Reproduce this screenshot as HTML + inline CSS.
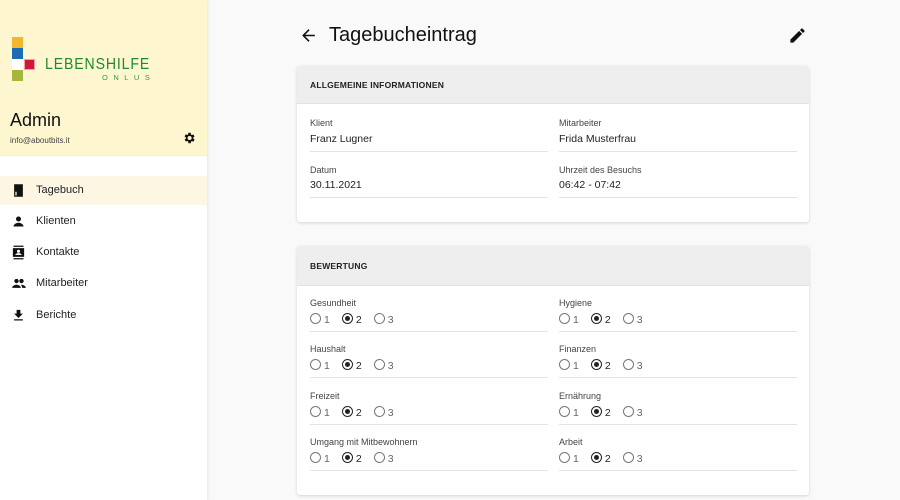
<!DOCTYPE html><html><head><style>
*{margin:0;padding:0;box-sizing:border-box}
body{width:900px;height:500px;overflow:hidden;background:#f9f9f9;font-family:"Liberation Sans",sans-serif;position:relative;color:#222}
.a{position:absolute}
.side{left:0;top:0;width:207px;height:500px;background:#fff;box-shadow:1px 0 3px rgba(0,0,0,.08)}
.top{left:0;top:0;width:207px;height:156px;background:#fdf6cf;border-bottom:1px solid #eee}
.nav{left:0;width:207px;height:29px;font-size:11px;color:#222}
.nav span{position:absolute;left:36px;top:8px}
.nav svg{position:absolute;left:11px;top:7px}
.card{left:297px;width:512px;background:#fff;border-radius:3px;box-shadow:0 1px 3px rgba(0,0,0,.15);overflow:hidden}
.hd{background:#eee;border-bottom:1px solid #e2e2e2;font-size:8.5px;font-weight:bold;letter-spacing:.2px;padding-left:13px}
.lb{font-size:9px;color:#444}
.vl{font-size:10.5px;color:#222}
.ln{height:1px;background:#e3e3e3;width:238px}
.r{font-size:10.5px;color:#666;white-space:nowrap}
.c{display:inline-block;width:11px;height:11px;border:1px solid #777;border-radius:50%;vertical-align:-1px;margin-right:3px;position:relative}
.c.on{border-color:#222}.c.on:after{content:"";position:absolute;left:2px;top:2px;width:5px;height:5px;border-radius:50%;background:#222}
.sp{display:inline-block;width:12px}
</style></head><body>
<div class="a side"></div>
<div class="a top"></div>
<div class="a" style="left:12px;top:37px;width:11px;height:11px;background:#f3b62f"></div>
<div class="a" style="left:12px;top:48px;width:11px;height:11px;background:#1c6bb5"></div>
<div class="a" style="left:12px;top:59px;width:11px;height:11px;background:#fff"></div>
<div class="a" style="left:24px;top:59px;width:11px;height:11px;background:#d4153a;border:1px solid #f0a0a0"></div>
<div class="a" style="left:12px;top:70px;width:11px;height:11px;background:#a5b73a"></div>
<div class="a" style="left:45px;top:56px;font-size:16px;color:#1e8a2c;letter-spacing:1px;transform:scaleX(.88);transform-origin:0 0">LEBENSHILFE</div>
<div class="a" style="left:102px;top:73px;font-size:7.5px;color:#3a9a40;letter-spacing:5.5px">ONLUS</div>
<div class="a" style="left:10px;top:110px;font-size:18px;color:#111">Admin</div>
<div class="a" style="left:10px;top:136px;font-size:8px;color:#444">info@aboutbits.it</div>
<svg class="a" style="left:182px;top:131px" width="14" height="14" viewBox="0 0 24 24"><path fill="#111" d="M19.4 13a7.5 7.5 0 000-2l2.1-1.6-2-3.5-2.5 1a7 7 0 00-1.7-1L15 3h-4l-.4 2.7a7 7 0 00-1.7 1l-2.5-1-2 3.5L6.6 11a7.5 7.5 0 000 2l-2.1 1.6 2 3.5 2.5-1a7 7 0 001.7 1L11 21h4l.4-2.7a7 7 0 001.7-1l2.5 1 2-3.5zM13 15.5A3.5 3.5 0 1113 8.5a3.5 3.5 0 010 7z"/></svg>
<div class="a nav" style="top:176px;background:#fdf6e3"><svg width="15" height="15" viewBox="0 0 24 24"><path d="M5 2h14v20H5z" fill="#111"/><path d="M7 14v6h2v-6z" fill="#fff"/></svg><span>Tagebuch</span></div>
<div class="a nav" style="top:207px"><svg width="15" height="15" viewBox="0 0 24 24"><circle cx="12" cy="8" r="4" fill="#111"/><path d="M4 20c0-4 5-6 8-6s8 2 8 6z" fill="#111"/></svg><span>Klienten</span></div>
<div class="a nav" style="top:238px"><svg width="15" height="15" viewBox="0 0 24 24"><path d="M4 1h16v2H4zM4 21h16v2H4zM3 5h18v14H3z" fill="#111"/><circle cx="12" cy="10" r="2.5" fill="#fff"/><path d="M7 16c0-2 3-3 5-3s5 1 5 3z" fill="#fff"/></svg><span>Kontakte</span></div>
<div class="a nav" style="top:269px"><svg width="16" height="15" viewBox="0 0 24 24"><circle cx="8" cy="8" r="3.5" fill="#111"/><circle cx="16" cy="8" r="3.5" fill="#111"/><path d="M1 19c0-3 4-5 7-5s7 2 7 5zM15 14c3 0 8 1.5 8 5h-6c0-2-1-4-2-5z" fill="#111"/></svg><span>Mitarbeiter</span></div>
<div class="a nav" style="top:301px"><svg width="15" height="15" viewBox="0 0 24 24"><path d="M19 9h-4V3H9v6H5l7 7zM5 18v2h14v-2z" fill="#111"/></svg><span>Berichte</span></div>

<svg class="a" style="left:299px;top:26px" width="19" height="19" viewBox="0 0 24 24"><path d="M20 11H7.8l5.6-5.6L12 4l-8 8 8 8 1.4-1.4L7.8 13H20z" fill="#111"/></svg>
<div class="a" style="left:329px;top:24px;font-size:20px;color:#111">Tagebucheintrag</div>
<svg class="a" style="left:788px;top:26px" width="19" height="19" viewBox="0 0 24 24"><path d="M3 17.25V21h3.75L17.8 9.94l-3.75-3.75zM20.7 7.04a1 1 0 000-1.41l-2.34-2.34a1 1 0 00-1.41 0l-1.83 1.83 3.75 3.75z" fill="#111"/></svg>

<div class="a card" style="top:66px;height:156px"><div class="hd" style="height:38px;line-height:38px">ALLGEMEINE INFORMATIONEN</div></div>
<div class="a card" style="top:246px;height:249px"><div class="hd" style="height:40px;line-height:40px">BEWERTUNG</div></div>

<div class="a lb" style="left:310px;top:118px">Klient</div><div class="a vl" style="left:310px;top:133px">Franz Lugner</div><div class="a ln" style="left:310px;top:151px"></div>
<div class="a lb" style="left:559px;top:118px">Mitarbeiter</div><div class="a vl" style="left:559px;top:133px">Frida Musterfrau</div><div class="a ln" style="left:559px;top:151px"></div>
<div class="a lb" style="left:310px;top:165px">Datum</div><div class="a vl" style="left:310px;top:179px">30.11.2021</div><div class="a ln" style="left:310px;top:197px"></div>
<div class="a lb" style="left:559px;top:165px">Uhrzeit des Besuchs</div><div class="a vl" style="left:559px;top:179px">06:42 - 07:42</div><div class="a ln" style="left:559px;top:197px"></div>

<div id="g"></div>
<script>
var rows=[["Gesundheit","Hygiene",298],["Haushalt","Finanzen",344],["Freizeit","Ernährung",391],["Umgang mit Mitbewohnern","Arbeit",437]];
var h="";rows.forEach(function(r){[[310,r[0]],[559,r[1]]].forEach(function(c){
h+='<div class="a lb" style="left:'+c[0]+'px;top:'+r[2]+'px">'+c[1]+'</div>';
h+='<div class="a r" style="left:'+c[0]+'px;top:'+(r[2]+15)+'px"><span class="c"></span>1<span class="sp"></span><span class="c on"></span><span style="color:#222">2</span><span class="sp"></span><span class="c"></span>3</div>';
h+='<div class="a ln" style="left:'+c[0]+'px;top:'+(r[2]+33)+'px"></div>';});});
document.getElementById("g").innerHTML=h;
</script>
</body></html>
